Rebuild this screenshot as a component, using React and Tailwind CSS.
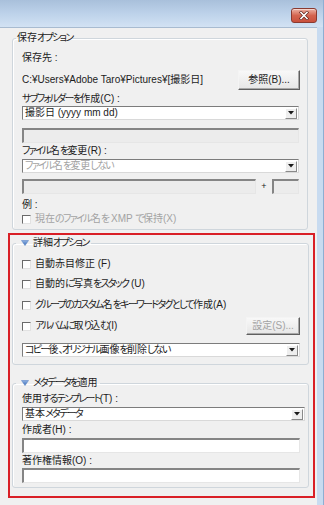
import React from 'react';

// Kana runs are drawn narrower (like the proportional Windows UI font); kanji keep full width
const J = ({ children }) =>
  String(children)
    .split(/([\u3040-\u30ff、]+)/)
    .filter(Boolean)
    .map((part, i) =>
      /[\u3040-\u30ff、]/.test(part) ? (
        <span key={i} className="tracking-[-1.7px]">{part}</span>
      ) : (
        <span key={i}>{part}</span>
      )
    );

const Triangle = () => (
  <svg width="8" height="6" viewBox="0 0 8 6" className="shrink-0">
    <defs>
      <linearGradient id="tg" x1="0" y1="0" x2="0" y2="1">
        <stop offset="0" stopColor="#8fb2e4" />
        <stop offset="1" stopColor="#3f6fb8" />
      </linearGradient>
    </defs>
    <polygon points="0.5,0.5 7.5,0.5 4,5.5" fill="url(#tg)" stroke="#5d86c6" strokeWidth="0.6" />
  </svg>
);

const CloseButton = () => (
  <div className="w-[26px] h-[15px] rounded-[3px] border border-[#8a3a30] bg-gradient-to-b from-[#eab1a4] via-[#d4644f] to-[#c9503c] flex items-center justify-center shadow-[inset_0_1px_0_#f6d4cc]">
    <svg width="10" height="9" viewBox="0 0 10 9">
      <path d="M2 1.5 L8 7.5 M8 1.5 L2 7.5" stroke="#5b231c" strokeWidth="3" strokeLinecap="square" />
      <path d="M2 1.5 L8 7.5 M8 1.5 L2 7.5" stroke="#ffffff" strokeWidth="1.6" strokeLinecap="square" />
    </svg>
  </div>
);

const Arrow = () => (
  <div className="w-[12px] h-[11px] mr-[1px] shrink-0 border border-t-white border-l-white border-r-[#8a8a8a] border-b-[#8a8a8a] bg-[#eeeeee] flex items-center justify-center">
    <svg width="6" height="4" viewBox="0 0 6 4">
      <polygon points="0,0 6,0 3,3.5" fill="#1a1a1a" />
    </svg>
  </div>
);

const Select = ({ children, disabled, className = '' }) => (
  <div className={`h-[14px] flex items-center bg-white border border-t-[#7c7c7c] border-l-[#7c7c7c] border-r-[#d9d9d9] border-b-[#d9d9d9] ${className}`}>
    <span className={`flex-1 pl-[2px] leading-[12px] truncate ${disabled ? 'text-[#a3a3a3]' : ''}`}>{children}</span>
    <Arrow />
  </div>
);

const Field = ({ disabled, className = '' }) => (
  <div className={`h-[15px] border-t-2 border-l-2 border-r border-b border-t-[#858585] border-l-[#858585] border-r-[#e6e6e6] border-b-[#e6e6e6] ${disabled ? 'bg-[#ececec]' : 'bg-white'} ${className}`} />
);

const Check = ({ children, disabled }) => (
  <div className="h-[12px] flex items-center gap-[4px]">
    <div className="w-[9px] h-[9px] shrink-0 bg-white border border-t-[#6a6a6a] border-l-[#6a6a6a] border-r-[#e2e2e2] border-b-[#e2e2e2]" />
    <span className={`leading-[12px] whitespace-nowrap ${disabled ? 'text-[#a3a3a3]' : ''}`}>{children}</span>
  </div>
);

const Button = ({ children, disabled, className = '' }) => (
  <div className={`flex items-center justify-center bg-gradient-to-b from-[#f8f8f8] to-[#e6e6e6] border border-t-[#f4f4f4] border-l-[#f4f4f4] border-r-[#5f5f5f] border-b-[#5f5f5f] shadow-[inset_-1px_-1px_0_#a8a8a8] ${disabled ? 'text-[#a3a3a3]' : ''} ${className}`}>
    {children}
  </div>
);

const Label = ({ children, className = '' }) => (
  <div className={`h-[12px] leading-[12px] whitespace-nowrap ${className}`}>{children}</div>
);

const Group = ({ title, arrow, className = '', innerClass = '', children }) => (
  <fieldset className={`border border-[#cfd6dc] rounded-[3px] shadow-[inset_1px_1px_0_#ffffff] pl-[3px] ${className}`}>
    <legend className={`h-[12px] leading-[12px] flex items-center gap-[4px] ${arrow ? 'pl-[5px] pr-[3px]' : 'px-[1px]'}`}>
      {arrow && <Triangle />}
      <span><J>{title}</J></span>
    </legend>
    <div className={`pl-[6px] ${innerClass}`}>{children}</div>
  </fieldset>
);

export default function App() {
  return (
    <div className={'w-[324px] h-[505px] overflow-hidden flex flex-col bg-[#c4d8ee] border-r border-[#8eaed2] font-[Liberation_Sans,Noto_Sans_CJK_JP,sans-serif] [font-feature-settings:"palt"_1] text-[10px] text-[#1c1c1c] leading-none'}>
      <div className="h-[27px] shrink-0 bg-gradient-to-b from-[#a9c0db] via-[#bdd2ea] to-[#d2e2f3] flex justify-end pt-[8px] pr-[6px]">
        <CloseButton />
      </div>
      <div className="flex-1 flex pr-[6px] bg-[#c8dbf0]">
        <div className="flex-1 bg-[#f0f0f0] border-t border-[#a8bbd0] pl-[8px] pr-[2px] pt-[4px]">
          <Group title="保存オプション" className="ml-[4px] mr-[7px] pb-[4px]" innerClass="pr-[8px]">
            <Label className="mt-[8px]"><J>保存先</J> :</Label>
            <div className="mt-[6px] h-[20px] flex items-center justify-between">
              <span className="whitespace-nowrap">C:¥Users¥Adobe Taro¥Pictures¥[<J>撮影日</J>]</span>
              <Button className="w-[62px] h-[20px] -mr-[1px]"><J>参照</J>(B)...</Button>
            </div>
            <Label className="mt-[3px]"><J>サブフォルダーを作成</J>(C) :</Label>
            <Select className="mt-[1px]"><J>撮影日</J> (yyyy mm dd)</Select>
            <Field disabled className="mt-[8px]" />
            <Label className="mt-[2px]"><J>ファイル名を変更</J>(R) :</Label>
            <Select disabled className="mt-[2px]"><J>ファイル名を変更しない</J></Select>
            <div className="mt-[6px] flex items-center">
              <Field disabled className="flex-1" />
              <span className="w-[16px] text-center text-[9px]">+</span>
              <Field disabled className="w-[27px]" />
            </div>
            <Label className="mt-[5px]"><J>例</J> :</Label>
            <div className="mt-[2px]">
              <Check disabled><J>現在のファイル名を</J> XMP <J>で保持</J>(X)</Check>
            </div>
          </Group>

          <div className="mt-[3px] border-2 border-[#d91f26] pb-[8px]">
            <Group title="詳細オプション" arrow className="mt-[2px] ml-[2px] mr-[4px] pb-[7px]" innerClass="pr-[8px]">
              <div className="mt-[9px]"><Check><J>自動赤目修正</J> (F)</Check></div>
              <div className="mt-[8px]"><Check><J>自動的に写真をスタック</J> (U)</Check></div>
              <div className="mt-[9px]"><Check><J>グループのカスタム名をキーワードタグとして作成</J>(A)</Check></div>
              <div className="mt-[6px] h-[18px] flex items-center justify-between">
                <Check><J>アルバムに取り込む</J>(I)</Check>
                <Button disabled className="w-[54px] h-[18px]"><J>設定</J>(S)...</Button>
              </div>
              <Select className="mt-[8px]"><J>コピー後、オリジナル画像を削除しない</J></Select>
            </Group>

            <Group title="メタデータを適用" arrow className="mt-[12px] ml-[2px] mr-[4px] pb-[4px]" innerClass="pr-[3px]">
              <Label className="mt-[4px]"><J>使用するテンプレート</J>(T) :</Label>
              <Select className="mt-[2px]"><J>基本メタデータ</J></Select>
              <Label className="mt-[3px]"><J>作成者</J>(H) :</Label>
              <Field className="mt-[2px] mr-[5px]" />
              <Label className="mt-[2px]"><J>著作権情報</J>(O) :</Label>
              <Field className="mt-[1px] mr-[5px]" />
            </Group>
          </div>
        </div>
      </div>
    </div>
  );
}
